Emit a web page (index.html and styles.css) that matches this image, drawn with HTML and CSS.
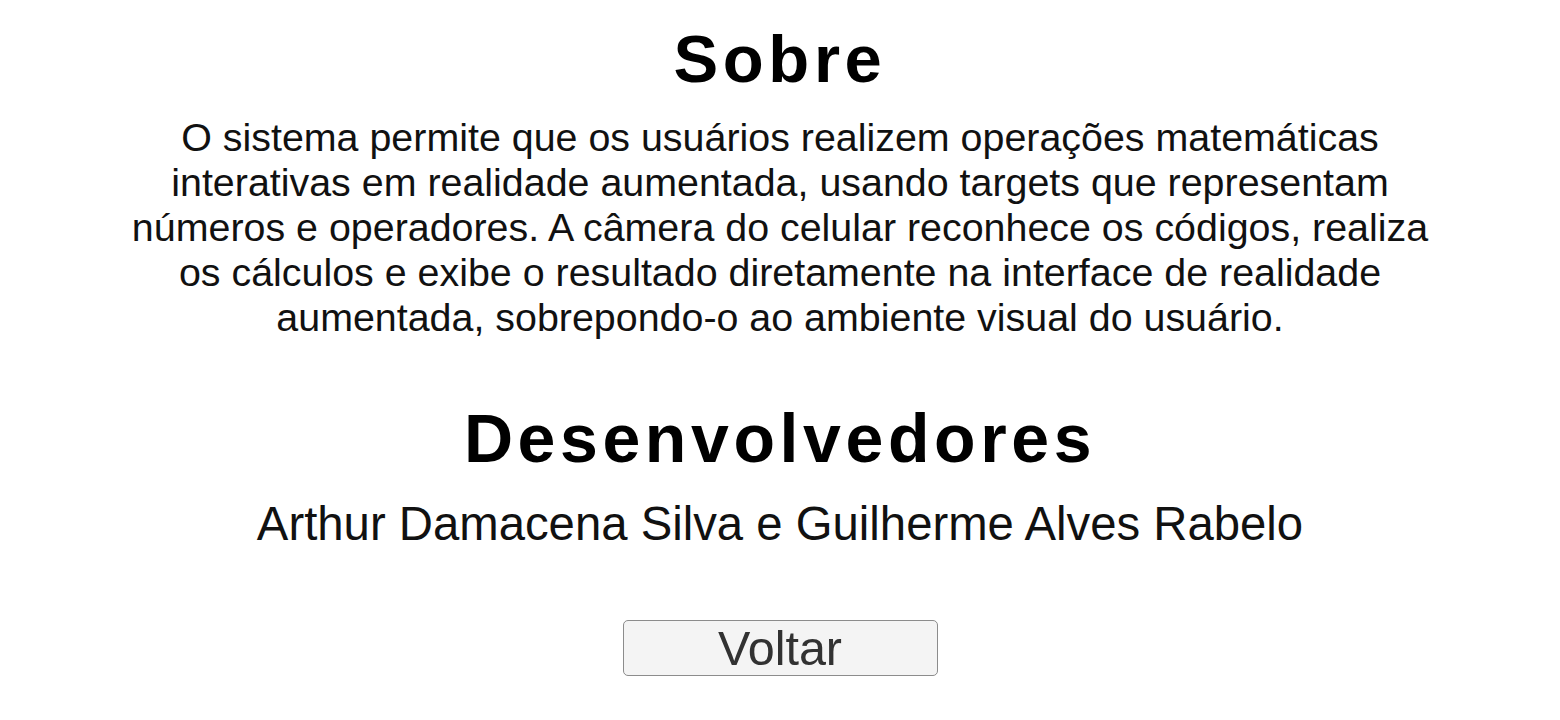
FILE: index.html
```html
<!DOCTYPE html>
<html lang="pt">
<head>
<meta charset="utf-8">
<title>Sobre</title>
<link rel="stylesheet" href="styles.css">
</head>
<body>
<main class="page">
  <h1 class="title title-sobre">Sobre</h1>
  <p class="about">O sistema permite que os usuários realizem operações matemáticas interativas em realidade aumentada, usando targets que representam números e operadores. A câmera do celular reconhece os códigos, realiza os cálculos e exibe o resultado diretamente na interface de realidade aumentada, sobrepondo-o ao ambiente visual do usuário.</p>
  <h2 class="title title-dev">Desenvolvedores</h2>
  <p class="devs">Arthur Damacena Silva e Guilherme Alves Rabelo</p>
  <button class="back">Voltar</button>
</main>
</body>
</html>
```
FILE: styles.css
```css
html, body {
  margin: 0;
  padding: 0;
  background: #ffffff;
}
body {
  width: 1560px;
  height: 720px;
  overflow: hidden;
  font-family: "Liberation Sans", Arial, sans-serif;
  color: #111111;
}
.page {
  display: flex;
  flex-direction: column;
  align-items: center;
}
.title {
  margin: 0;
  font-weight: bold;
  color: #000;
  font-size: 68px;
  line-height: 68px;
  letter-spacing: 4.6px;
}
.title-sobre {
  margin-top: 25px;
  font-size: 67px;
}
.about {
  margin: 22px 0 0;
  width: 1330px;
  text-align: center;
  font-size: 39.4px;
  line-height: 45px;
}
.title-dev {
  margin-top: 64px;
}
.devs {
  margin: 28px 0 0;
  font-size: 47.3px;
  line-height: 48px;
}
.back {
  margin-top: 72px;
  width: 315px;
  height: 56px;
  border: 1px solid #8c8c8c;
  border-radius: 5px;
  background: #f4f4f4;
  font-family: "Liberation Sans", Arial, sans-serif;
  font-size: 48.5px;
  color: #323232;
  padding: 0;
  line-height: 54px;
}
```
